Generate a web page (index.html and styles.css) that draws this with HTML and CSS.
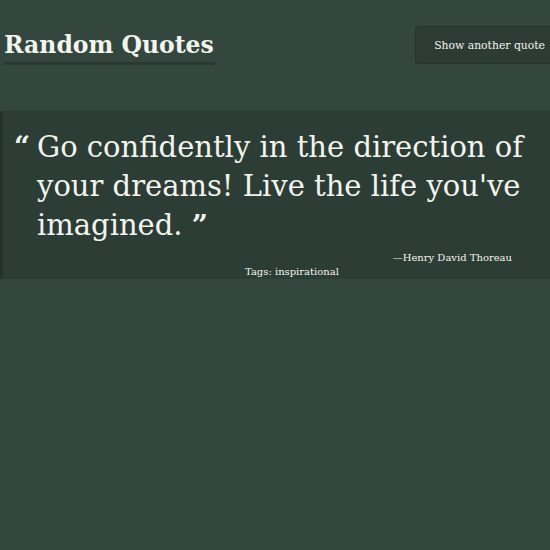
FILE: index.html
```html
<!DOCTYPE html>
<html>
<head>
<meta charset="utf-8">
<link rel="stylesheet" href="styles.css">
</head>
<body>
<div class="page">
  <header class="header">
    <h1 class="title">Random Quotes</h1>
    <button class="btn">Show another quote</button>
  </header>
  <section class="quote-box">
    <blockquote class="quote"><span class="open">“</span>Go confidently in the direction of your dreams! Live the life you've imagined. <span class="close">”</span></blockquote>
    <div class="author">—Henry David Thoreau</div>
    <div class="tags">Tags: inspirational</div>
  </section>
</div>
</body>
</html>
```
FILE: styles.css
```css
html, body {
  margin: 0;
  padding: 0;
  overflow: hidden;
  background: #33473e;
  height: 100%;
}
body {
  font-family: "DejaVu Serif", "Liberation Serif", serif;
  color: #f4f4ee;
}
.page {
  width: 564px;
}
.header {
  display: flex;
  justify-content: space-between;
  align-items: flex-start;
  padding: 26px 0 0 3px;
  height: 85px;
  box-sizing: border-box;
}
.title {
  margin: 0;
  font-size: 23.5px;
  font-weight: bold;
  line-height: 33px;
  padding: 3px 1px 0;
  border-bottom: 3px solid #2a3a33;
}
.btn {
  font-family: "DejaVu Serif", serif;
  font-size: 10.8px;
  color: #f4f4ee;
  background: #2c3c35;
  border: 1px solid #26342e;
  border-radius: 3px;
  height: 38px;
  padding: 0 18px;
  flex-shrink: 0;
}
.quote-box {
  margin-top: 26px;
  background: #2c3d36;
  border-left: 3px solid #24322c;
  padding: 17px 0 0 0;
  height: 168px;
  box-sizing: border-box;
}
.quote {
  margin: 0;
  padding: 0 20px 0 34px;
  width: 490px;
  font-size: 29px;
  line-height: 39px;
  font-weight: normal;
  position: relative;
}
.open {
  position: absolute;
  left: 11px;
  top: -1px;
  font-size: 28px;
  font-weight: bold;
}
.close {
  font-size: 28px;
  font-weight: bold;
}
.author {
  text-align: right;
  width: 509px;
  font-size: 10px;
  margin-top: 6px;
  line-height: 14px;
}
.tags {
  font-size: 10px;
  line-height: 14px;
  padding-left: 242px;
}
```
